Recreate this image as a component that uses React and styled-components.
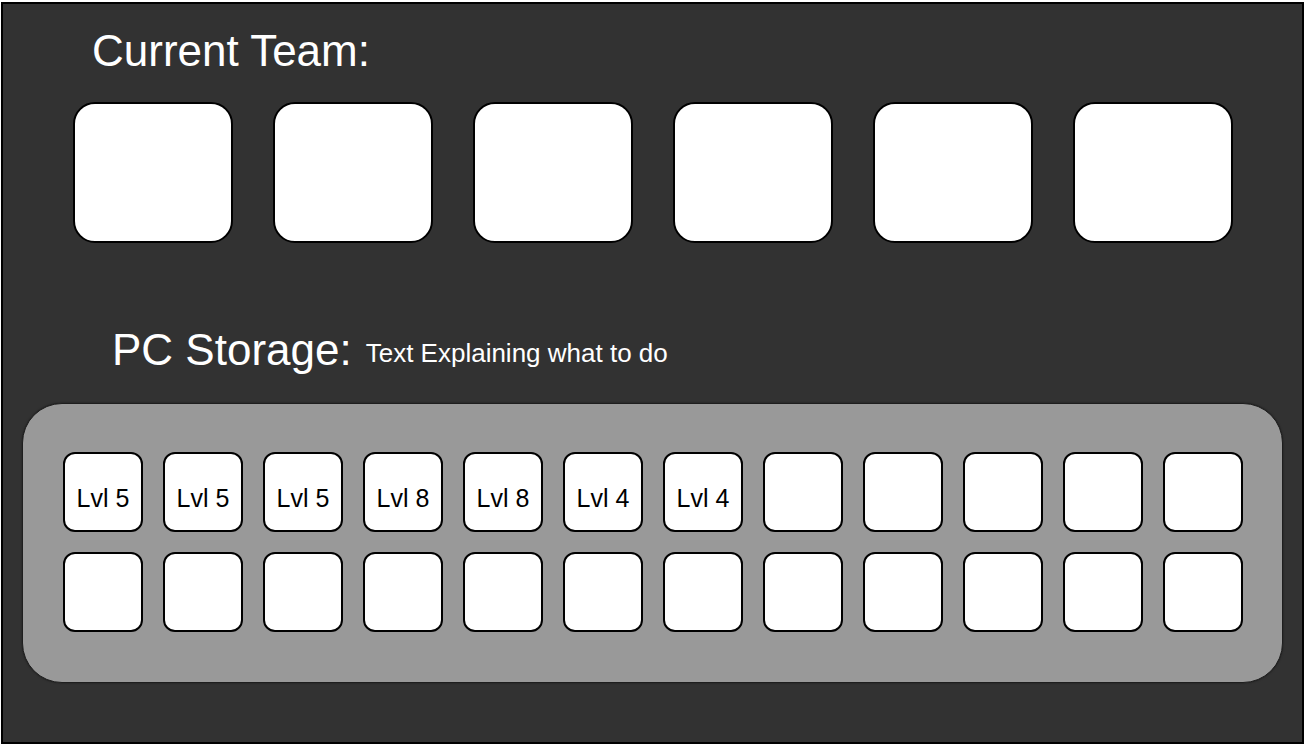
import React from 'react';
import styled, {createGlobalStyle} from "styled-components";

const GlobalStyle = createGlobalStyle`
  html, body {
    margin: 0;
    padding: 0;
    background: #ffffff;
  }
  body {
    font-family: "Liberation Sans", Arial, sans-serif;
  }
`;

const team = [1, 2, 3, 4, 5, 6];
const storage = [
    'Lvl 5', 'Lvl 5', 'Lvl 5', 'Lvl 8', 'Lvl 8', 'Lvl 4', 'Lvl 4', '', '', '', '', '',
    '', '', '', '', '', '', '', '', '', '', '', '',
];

const App = () => {
    return (
        <>
            <GlobalStyle/>
            <StyledScreen>
                <Heading $indent={89} $top={22}>Current Team:</Heading>
                <TeamRow>
                    {team.map(i => <TeamSlot key={i}/>)}
                </TeamRow>

                <StorageHeader>
                    <Heading $indent={0} $top={0}>PC Storage:</Heading>
                    <Hint>Text Explaining what to do</Hint>
                </StorageHeader>

                <StoragePanel>
                    <StorageGrid>
                        {storage.map((lvl, i) => <BoxSlot key={i}>{lvl}</BoxSlot>)}
                    </StorageGrid>
                </StoragePanel>
            </StyledScreen>
        </>
    );
};

const StyledScreen = styled.section`
  box-sizing: border-box;
  width: 1303px;
  height: 742px;
  margin: 2px 0 0 1px;
  border: 2px solid #000000;
  background: #323232;
  color: #ffffff;
  overflow: hidden;
`;

const Heading = styled.h2`
  margin: ${p => p.$top}px 0 0 ${p => p.$indent}px;
  font-size: 44px;
  line-height: 50px;
  font-weight: 400;
  color: #ffffff;
`;

const TeamRow = styled.div`
  display: flex;
  gap: 40px;
  margin: 26px 0 0 70px;
`;

const TeamSlot = styled.div`
  box-sizing: border-box;
  width: 160px;
  height: 141px;
  border: 2px solid #000000;
  border-radius: 22px;
  background: #ffffff;
`;

const StorageHeader = styled.div`
  display: flex;
  align-items: baseline;
  margin: 82px 0 0 109px;
`;

const Hint = styled.span`
  margin-left: 14px;
  font-size: 26px;
  line-height: 30px;
  transform: translateY(-3px);
`;

const StoragePanel = styled.div`
  box-sizing: border-box;
  width: 1261px;
  height: 280px;
  margin: 28px 0 0 19px;
  padding: 48px 0 0 40px;
  border: 1px solid #1e1e1e;
  border-radius: 40px;
  background: #999999;
  box-shadow: 0 0 2px rgba(0, 0, 0, 0.5);
`;

const StorageGrid = styled.div`
  display: grid;
  grid-template-columns: repeat(12, 80px);
  grid-auto-rows: 80px;
  gap: 20px;
`;

const BoxSlot = styled.div`
  box-sizing: border-box;
  display: flex;
  align-items: center;
  justify-content: center;
  padding-top: 12px;
  border: 2px solid #000000;
  border-radius: 12px;
  background: #ffffff;
  color: #000000;
  font-size: 25px;
`;

export default App;
